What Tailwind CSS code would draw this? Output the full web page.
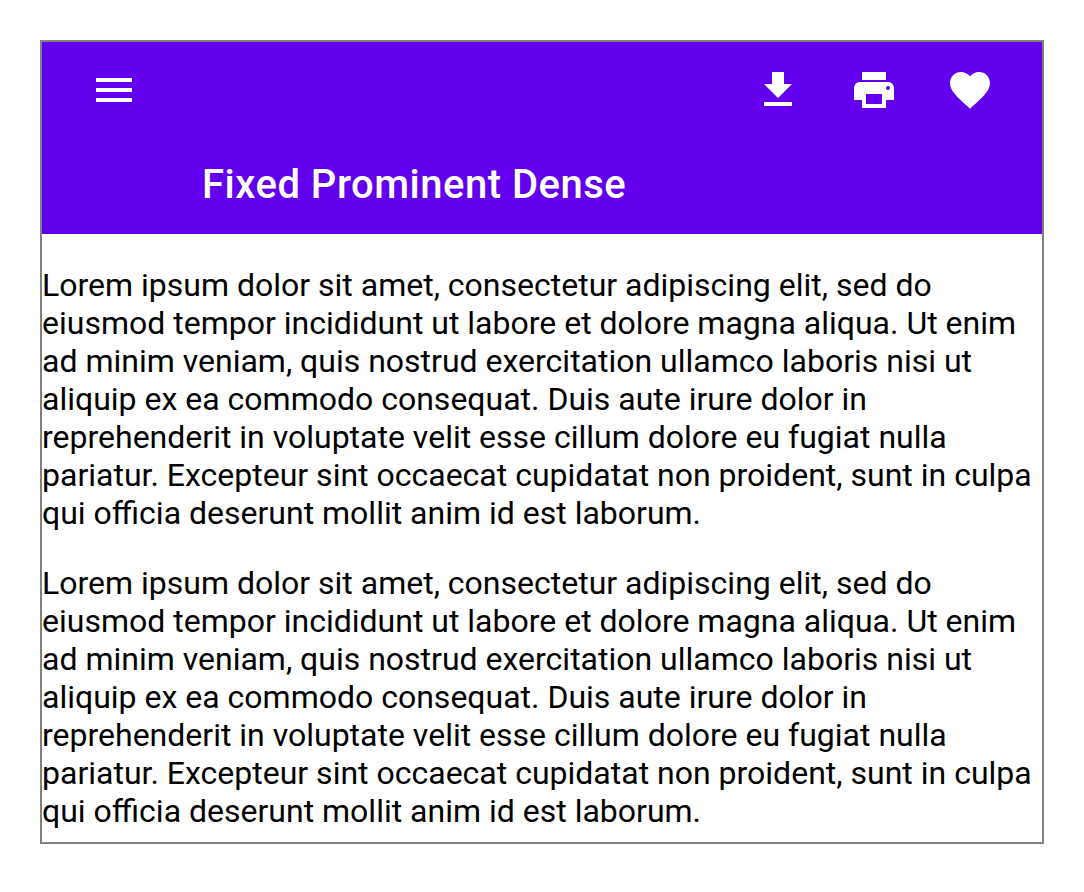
<!DOCTYPE html>
<html lang="en">
<head>
<meta charset="utf-8">
<meta name="viewport" content="width=device-width, initial-scale=1">
<title>Fixed Prominent Dense</title>
<script src="https://cdn.jsdelivr.net/npm/@tailwindcss/browser@4"></script>
</head>
<body class="bg-white p-10 font-['Roboto',sans-serif] text-black">
<div class="border-2 border-[#808080]">
  <header class="bg-[#6200ee] text-white">
    <div class="flex h-24 items-center justify-between px-6">
      <button type="button" aria-label="Open menu" class="grid size-24 place-items-center">
        <svg class="size-12" viewBox="0 0 24 24" fill="currentColor" aria-hidden="true"><path d="M3 18h18v-2H3v2zm0-5h18v-2H3v2zm0-7v2h18V6H3z"/></svg>
      </button>
      <div class="flex">
        <button type="button" aria-label="Download" class="grid size-24 place-items-center">
          <svg class="size-12" viewBox="0 0 24 24" fill="currentColor" aria-hidden="true"><path d="M19 9h-4V3H9v6H5l7 7 7-7zM5 18v2h14v-2H5z"/></svg>
        </button>
        <button type="button" aria-label="Print" class="grid size-24 place-items-center">
          <svg class="size-12" viewBox="0 0 24 24" fill="currentColor" aria-hidden="true"><path d="M19 8H5c-1.66 0-3 1.34-3 3v6h4v4h12v-4h4v-6c0-1.66-1.34-3-3-3zm-3 11H8v-5h8v5zm3-7c-.55 0-1-.45-1-1s.45-1 1-1 1 .45 1 1-.45 1-1 1zm-1-9H6v4h12V3z"/></svg>
        </button>
        <button type="button" aria-label="Favorite" class="grid size-24 place-items-center">
          <svg class="size-12" viewBox="0 0 24 24" fill="currentColor" aria-hidden="true"><path d="M12 21.35l-1.45-1.32C5.4 15.36 2 12.28 2 8.5 2 5.42 4.42 3 7.5 3c1.74 0 3.41.81 4.5 2.09C13.09 3.81 14.76 3 16.5 3 19.58 3 22 5.42 22 8.5c0 3.78-3.4 6.86-8.55 11.54L12 21.35z"/></svg>
        </button>
      </div>
    </div>
    <div class="flex h-24 items-end pb-5 pl-40">
      <h1 class="text-[40px] font-medium leading-[58px] tracking-[0.0125em]">Fixed Prominent Dense</h1>
    </div>
  </header>
  <main class="flex flex-col gap-8 pt-8 pb-3 text-[32px] leading-[38px]">
    <p>Lorem ipsum dolor sit amet, consectetur adipiscing elit, sed do eiusmod tempor incididunt ut labore et dolore magna aliqua. Ut enim ad minim veniam, quis nostrud exercitation ullamco laboris nisi ut aliquip ex ea commodo consequat. Duis aute irure dolor in reprehenderit in voluptate velit esse cillum dolore eu fugiat nulla pariatur. Excepteur sint occaecat cupidatat non proident, sunt in culpa qui officia deserunt mollit anim id est laborum.</p>
    <p>Lorem ipsum dolor sit amet, consectetur adipiscing elit, sed do eiusmod tempor incididunt ut labore et dolore magna aliqua. Ut enim ad minim veniam, quis nostrud exercitation ullamco laboris nisi ut aliquip ex ea commodo consequat. Duis aute irure dolor in reprehenderit in voluptate velit esse cillum dolore eu fugiat nulla pariatur. Excepteur sint occaecat cupidatat non proident, sunt in culpa qui officia deserunt mollit anim id est laborum.</p>
  </main>
</div>
</body>
</html>
